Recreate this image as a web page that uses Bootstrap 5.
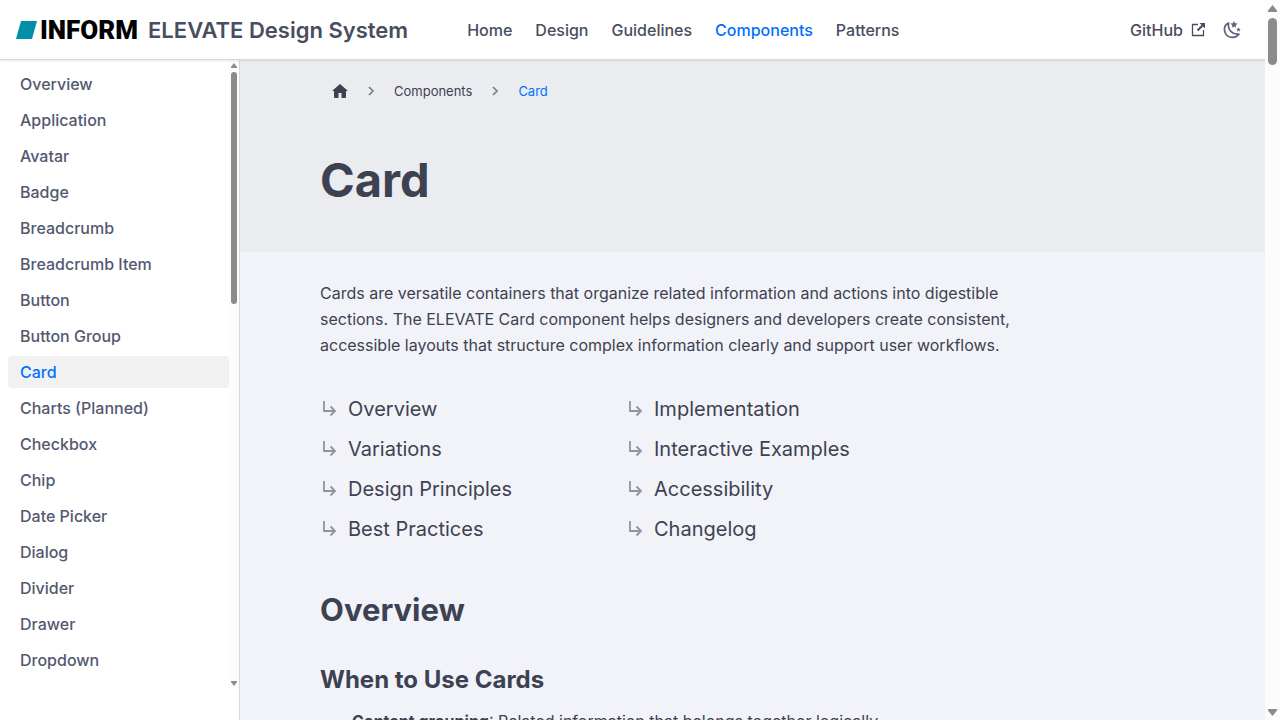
<!DOCTYPE html>
<html lang="en">
<head>
<meta charset="utf-8">
<meta name="viewport" content="width=device-width, initial-scale=1">
<title>Card | ELEVATE Design System</title>
<link href="https://cdn.jsdelivr.net/npm/bootstrap@5.3.0/dist/css/bootstrap.min.css" rel="stylesheet">
<style>
:root { --ink: #3d4252; --blue: #0071ff; --line: #d5d7e1; }
body { font-family: Inter, "Liberation Sans", sans-serif; color: var(--ink); background: #f2f3f8; }
a { color: inherit; text-decoration: none; }
a:hover { color: var(--blue); }
.topbar { height: 60px; background: #fff; border-bottom: 1px solid var(--line); box-shadow: 0 1px 2px rgba(0,0,0,.1); font-weight: 500; color: #484d60; z-index: 2; padding: 0 23px 0 16px; }
.logo-word { font: 900 26px/28px Roboto, sans-serif; color: #000; margin-left: 2px; }
.site-title { font-size: 22px; line-height: 28px; font-weight: 600; margin-left: 10px; }
.topnav { margin-left: 59px; gap: 23px; }
.topbar a.is-active, .sidebar a.is-active, .crumbs .is-active { color: var(--blue); }
.icon-btn { border: 0; background: none; color: #5a6378; padding: 0; line-height: 0; }
.sidebar { width: 240px; background: #fff; border-right: 1px solid var(--line); }
.sidebar ul { padding: 8px 0 0 8px; gap: 4px; }
.sidebar a { display: block; padding: 4px 12px; line-height: 24px; border-radius: 4px; font-weight: 500; color: #535970; }
.sidebar a.is-active { background: #f1f1f1; }
.bar { background: #fcfcfc; }
.bar i { display: block; background: #8b8b8b; }
.bar-side { width: 10px; margin-bottom: 32px; padding: 3px 0 2px; }
.bar-page { width: 15px; padding: 5px 0 4px; }
.up { clip-path: polygon(50% 0, 100% 80%, 100% 100%, 0 100%, 0 80%); }
.down { clip-path: polygon(0 0, 100% 0, 100% 20%, 50% 100%, 0 20%); }
.bar-side .up, .bar-side .down { width: 6px; height: 5px; }
.bar-side .thumb { width: 6px; height: 232px; border-radius: 3px; margin-top: 4px; }
.bar-page .up, .bar-page .down { width: 9px; height: 7px; }
.bar-page .thumb { width: 9px; height: 47px; border-radius: 5px; margin-top: 6px; }
.hero { background: #ebecf0; padding: 16px 80px 40px; }
.crumbs { font-size: 13px; line-height: 30px; padding-left: 12px; }
.crumbs .sep { width: 16px; margin: 0 15px; color: #7b7e88; }
h1 { font-size: 47px; line-height: 64px; font-weight: 700; margin: 42px 0 0; }
.article { padding: 28px 80px; }
.article-inner { max-width: 704px; }
.article p { line-height: 26px; margin-bottom: 31px; }
.toc { max-width: 612px; font-size: 20px; line-height: 40px; }
.toc a { display: flex; align-items: center; }
.toc svg { color: #9094a0; margin-right: 8px; }
h2 { font-size: 31px; line-height: 40px; font-weight: 700; margin: 41px 0 0; }
h3 { font-size: 24px; line-height: 32px; font-weight: 700; margin: 34px 0 0; }
.points { line-height: 26px; padding-left: 32px; margin-top: 12px; }
</style>
</head>
<body>
<svg class="d-none">
  <symbol id="turn" viewBox="0 0 20 20"><path d="M4 2v10h11M10.500 7.500l4.500 4.500-4.500 4.500" fill="none" stroke="currentColor" stroke-width="1.800"/></symbol>
  <symbol id="chev" viewBox="0 0 16 16"><path d="M6 4l4 4-4 4" fill="none" stroke="currentColor" stroke-width="1.700"/></symbol>
</svg>
<div class="d-flex vh-100 overflow-hidden">
  <div class="d-flex flex-column flex-grow-1 overflow-hidden">
    <header class="topbar d-flex align-items-center flex-shrink-0">
      <a href="#" class="d-flex align-items-center">
        <svg width="22" height="18" viewBox="0 0 22 18" aria-hidden="true"><path d="M5 0h16l-5 18H0z" fill="#008fa7"/></svg>
        <span class="logo-word">INFORM</span>
        <span class="site-title">ELEVATE Design System</span>
      </a>
      <nav class="topnav d-flex">
        <a href="#">Home</a><a href="#">Design</a><a href="#">Guidelines</a><a href="#" class="is-active">Components</a><a href="#">Patterns</a>
      </nav>
      <a href="#" class="ms-auto d-flex align-items-center">GitHub
        <svg class="ms-2" width="15" height="15" viewBox="0 0 15 15" fill="none" stroke="currentColor"><path d="M7 2.500H1.500v11h11V8" stroke-width="1.300"/><path d="M6.500 8.500l5-5" stroke-width="2.200"/><path d="M8.500 1H14v5.500z" fill="currentColor" stroke="none"/></svg>
      </a>
      <button type="button" class="icon-btn ms-3" aria-label="Toggle dark mode">
        <svg width="20" height="20" viewBox="0 0 20 20"><path d="M6.500 3.100C3.600 4.500 1.900 7.600 2.600 11c.8 4 4.200 6.600 8.100 6.400 2.600-.1 4.900-1.400 6.200-3.400C10.800 15 5.600 10.200 6.500 3.100z" fill="none" stroke="currentColor" stroke-width="1.700" stroke-linejoin="round"/><path d="M12 .8l1 2.500 2.700.2-2.100 1.700.7 2.600-2.300-1.400-2.300 1.400.7-2.600-2.100-1.700 2.700-.2zM16.500 7.200l.6 1.600 1.700.1-1.300 1.100.4 1.700-1.400-1-1.400 1 .4-1.700-1.300-1.100 1.700-.1z" fill="currentColor"/></svg>
      </button>
    </header>
    <div class="d-flex flex-grow-1 overflow-hidden">
      <aside class="sidebar d-flex flex-shrink-0">
        <ul class="list-unstyled d-flex flex-column flex-grow-1 mb-0">
          <li><a href="#">Overview</a></li>
          <li><a href="#">Application</a></li>
          <li><a href="#">Avatar</a></li>
          <li><a href="#">Badge</a></li>
          <li><a href="#">Breadcrumb</a></li>
          <li><a href="#">Breadcrumb Item</a></li>
          <li><a href="#">Button</a></li>
          <li><a href="#">Button Group</a></li>
          <li><a href="#" class="is-active">Card</a></li>
          <li><a href="#">Charts (Planned)</a></li>
          <li><a href="#">Checkbox</a></li>
          <li><a href="#">Chip</a></li>
          <li><a href="#">Date Picker</a></li>
          <li><a href="#">Dialog</a></li>
          <li><a href="#">Divider</a></li>
          <li><a href="#">Drawer</a></li>
          <li><a href="#">Dropdown</a></li>
        </ul>
        <div class="bar bar-side d-flex flex-column align-items-center" aria-hidden="true"><i class="up"></i><i class="thumb"></i><i class="down mt-auto"></i></div>
      </aside>
      <main class="flex-grow-1 overflow-hidden">
        <div class="hero">
          <nav class="crumbs d-flex align-items-center" aria-label="Breadcrumb">
            <a href="#" class="d-flex" aria-label="Home"><svg width="16" height="16" viewBox="0 0 16 16"><path d="M8 1l8 7h-2v6q0 1-1 1H9.500v-5h-3v5H3q-1 0-1-1V8H0z" fill="currentColor"/></svg></a>
            <svg class="sep" width="16" height="16"><use href="#chev"/></svg>
            <a href="#">Components</a>
            <svg class="sep" width="16" height="16"><use href="#chev"/></svg>
            <span class="is-active">Card</span>
          </nav>
          <h1>Card</h1>
        </div>
        <article class="article">
          <div class="article-inner">
            <p>Cards are versatile containers that organize related information and actions into digestible sections. The ELEVATE Card component helps designers and developers create consistent, accessible layouts that structure complex information clearly and support user workflows.</p>
          </div>
          <nav class="toc row gx-0" aria-label="On this page">
            <div class="col-6 d-flex flex-column">
              <a href="#overview"><svg width="20" height="20"><use href="#turn"/></svg>Overview</a>
              <a href="#"><svg width="20" height="20"><use href="#turn"/></svg>Variations</a>
              <a href="#"><svg width="20" height="20"><use href="#turn"/></svg>Design Principles</a>
              <a href="#"><svg width="20" height="20"><use href="#turn"/></svg>Best Practices</a>
            </div>
            <div class="col-6 d-flex flex-column text-nowrap">
              <a href="#"><svg width="20" height="20"><use href="#turn"/></svg>Implementation</a>
              <a href="#"><svg width="20" height="20"><use href="#turn"/></svg>Interactive Examples</a>
              <a href="#"><svg width="20" height="20"><use href="#turn"/></svg>Accessibility</a>
              <a href="#"><svg width="20" height="20"><use href="#turn"/></svg>Changelog</a>
            </div>
          </nav>
          <h2 id="overview">Overview</h2>
          <h3>When to Use Cards</h3>
          <ul class="points"><li><strong>Content grouping</strong>: Related information that belongs together logically</li></ul>
        </article>
      </main>
    </div>
  </div>
  <div class="bar bar-page d-flex flex-column align-items-center flex-shrink-0" aria-hidden="true"><i class="up"></i><i class="thumb"></i><i class="down mt-auto"></i></div>
</div>
<script src="https://cdn.jsdelivr.net/npm/bootstrap@5.3.0/dist/js/bootstrap.bundle.min.js"></script>
</body>
</html>
